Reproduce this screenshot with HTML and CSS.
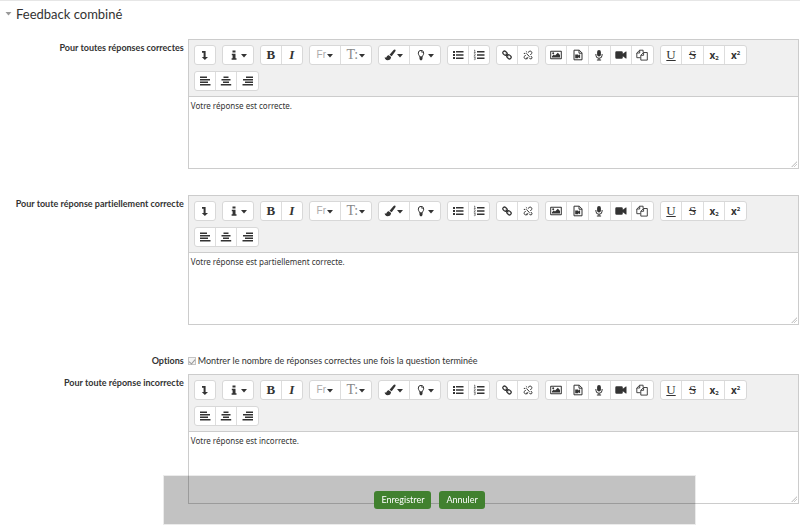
FILE: index.html
```html
<!DOCTYPE html>
<html lang="fr">
<head>
<meta charset="utf-8">
<meta name="viewport" content="width=device-width, initial-scale=1">
<title>Feedback combiné</title>
<link rel="stylesheet" href="styles.css">
</head>
<body>
<svg class="sprite" aria-hidden="true">
  <symbol id="i-toggle" viewBox="0 0 12 12"><path d="M3 2h3.600v6H9L5.900 11 2.800 8H4.600V3.800H3z"/></symbol>
  <symbol id="i-info" viewBox="0 0 12 12"><path d="M4.500 1.500h3v2h-3zM3.800 4.700h3.700v4.600h1v1.500H3.600V9.300h1V6.200h-.8z"/></symbol>
  <symbol id="i-caret" viewBox="0 0 6 4"><path d="M0 0h6L3 3.600z"/></symbol>
  <symbol id="i-brush" viewBox="0 0 12 12"><path d="M11.300.8c.6.500.3 1.200-.1 1.800L7.700 7.300 5.500 5.700 9.600 1.100c.5-.5 1.200-.7 1.700-.3zM4.800 6.200l2.300 1.700c0 2-1.500 3.300-3.500 3.300C1.800 11.200.8 10 .7 8.300c1 .6 1.700.3 2-.6.4-1 1.100-1.500 2.100-1.500z"/></symbol>
  <symbol id="i-bulb" viewBox="0 0 12 12"><path fill="none" stroke="currentColor" stroke-width="1" d="M4.700 7.800C4.600 6.500 3.300 6 3.300 4.100a2.700 2.700 0 0 1 5.400 0c0 1.900-1.300 2.400-1.400 3.700zM6.200 2.700c.7 0 1.200.4 1.200 1"/><path d="M4.500 8.100h3v2l-.8 1.200H5.300l-.8-1.200z"/></symbol>
  <symbol id="i-ul" viewBox="0 0 12 12"><path d="M1 2h2v2H1zM1 5h2v2H1zM1 8h2v2H1zM4 2h7.500v1.500H4zM4 5.200h7.500v1.500H4zM4 8.400h7.500v1.500H4z"/></symbol>
  <symbol id="i-ol" viewBox="0 0 12 12"><path d="M4 2h7.500v1.500H4zM4 5.200h7.500v1.500H4zM4 8.400h7.500v1.500H4z"/><path fill="none" stroke="currentColor" stroke-width=".6" d="M1 1.500l.8-.5v2.700M.9 3.700h1.800M.9 5c1.800-.6 1.800.6 0 2h1.700M.9 8.300h1.500l-.8 1c1.500.1 1.200 1.700-.7 1.300"/></symbol>
  <symbol id="i-link" viewBox="0 0 12 12"><g fill="none" stroke="currentColor" stroke-width="1.500" transform="rotate(42 6 6)"><rect x="0" y="4" width="5.600" height="4" rx="2"/><rect x="6.400" y="4" width="5.600" height="4" rx="2"/><path d="M3.800 6h4.400"/></g></symbol>
  <symbol id="i-unlink" viewBox="0 0 12 12"><g fill="none" stroke="currentColor" stroke-width="1.200"><path d="M5.800 3.200l1.700-1.500c1.800-1.200 4 .8 2.800 2.600L8.800 6M6.200 8.800L4.500 10.300C2.700 11.500.5 9.500 1.700 7.700L3.200 6M4 4.200l4 3.900M7.300 9.300l1.300 1.300c1.500.6 2.700-.8 2-2.100L9.300 7.200M4.600 2.600L3.500 1.500M2.800 4.100H1M4.700 9v2"/></g></symbol>
  <symbol id="i-image" viewBox="0 0 12 12"><path fill-rule="evenodd" d="M1 1.700h10q.8 0 .8.800v7q0 .8-.8.800H1q-.8 0-.8-.8v-7q0-.8.800-.8zM1.200 2.700v6.600h9.600V2.700z"/><path d="M2 8.600V7.200l1.800-1.700L5 6.600l2.800-2.800L10 6v2.600z"/><circle cx="3.200" cy="4.300" r="1"/></symbol>
  <symbol id="i-media" viewBox="0 0 12 12"><path fill="none" stroke="currentColor" d="M2 1.200h5.300L10 3.900v6.900H2zM7 1.200v3h3"/><path d="M3.200 5.500h3v1l1.900-1.200v4L6.200 8.200v1h-3z"/></symbol>
  <symbol id="i-mic" viewBox="0 0 12 12"><rect x="4.100" y="1" width="3.800" height="6.400" rx="1.900"/><path fill="none" stroke="currentColor" d="M2.900 5v1.200a3.100 3.100 0 0 0 6.200 0V5M6 9.300v1.800M3.900 11h4.200"/></symbol>
  <symbol id="i-video" viewBox="0 0 12 12"><path d="M1.500 2.300h5q1.300 0 1.300 1.200v1.300l3-2.400h.7v7.200h-.7l-3-2.400v1.300q0 1.200-1.300 1.200h-5Q.3 9.700.3 8.500v-5q0-1.200 1.200-1.200z"/></symbol>
  <symbol id="i-files" viewBox="0 0 12 12"><path fill="none" stroke="currentColor" stroke-width=".9" d="M4.500 8.700H.8V4L3.700 1.200h3.400v2.300M3.700 1.200V4H.8M7.600 3.500h3.700v7.600H4.800V6.300zM7.600 3.500v2.800H4.800"/></symbol>
  <symbol id="i-left" viewBox="0 0 12 12"><path d="M1 1.500h7V3H1zM1 4h10v1.500H1zM1 6.500h8V8H1zM1 9h10.500v1.500H1z"/></symbol>
  <symbol id="i-center" viewBox="0 0 12 12"><path d="M3.500 1.500h5V3h-5zM1.500 4h9v1.500h-9zM3 6.500h6V8H3zM.8 9h10.400v1.500H.8z"/></symbol>
  <symbol id="i-right" viewBox="0 0 12 12"><path d="M4 1.500h7V3H4zM1 4h10v1.500H1zM3 6.500h8V8H3zM.5 9H11v1.500H.5z"/></symbol>
</svg>

<template id="toolbar-template">
  <div class="group single"><button type="button" aria-label="Afficher plus de boutons"><svg class="icon"><use href="#i-toggle"/></svg></button></div>
  <div class="group menu"><button type="button" aria-label="Styles de paragraphe"><svg class="icon"><use href="#i-info"/></svg><svg class="caret"><use href="#i-caret"/></svg></button></div>
  <div class="group pair"><button type="button" aria-label="Gras"><b>B</b></button><button type="button" aria-label="Italique"><i>I</i></button></div>
  <div class="group menus"><button type="button" aria-label="Police"><span class="family">Fr</span><svg class="caret"><use href="#i-caret"/></svg></button><button type="button" aria-label="Taille"><span class="size">T:</span><svg class="caret"><use href="#i-caret"/></svg></button></div>
  <div class="group menus"><button type="button" aria-label="Couleur du texte"><svg class="icon"><use href="#i-brush"/></svg><svg class="caret"><use href="#i-caret"/></svg></button><button type="button" aria-label="Couleur de fond"><svg class="icon"><use href="#i-bulb"/></svg><svg class="caret"><use href="#i-caret"/></svg></button></div>
  <div class="group pair"><button type="button" aria-label="Liste à puces"><svg class="icon"><use href="#i-ul"/></svg></button><button type="button" aria-label="Liste numérotée"><svg class="icon"><use href="#i-ol"/></svg></button></div>
  <div class="group pair"><button type="button" aria-label="Lien"><svg class="icon small"><use href="#i-link"/></svg></button><button type="button" aria-label="Supprimer le lien"><svg class="icon small"><use href="#i-unlink"/></svg></button></div>
  <div class="group five"><button type="button" aria-label="Image"><svg class="icon"><use href="#i-image"/></svg></button><button type="button" aria-label="Média"><svg class="icon"><use href="#i-media"/></svg></button><button type="button" aria-label="Enregistrer du son"><svg class="icon"><use href="#i-mic"/></svg></button><button type="button" aria-label="Enregistrer une vidéo"><svg class="icon"><use href="#i-video"/></svg></button><button type="button" aria-label="Gérer les fichiers"><svg class="icon"><use href="#i-files"/></svg></button></div>
  <div class="group four"><button type="button" aria-label="Souligné"><u>U</u></button><button type="button" aria-label="Barré"><s>S</s></button><button type="button" aria-label="Indice"><span class="script">x<sub>2</sub></span></button><button type="button" aria-label="Exposant"><span class="script">x<sup>2</sup></span></button></div>
  <div class="group three"><button type="button" aria-label="Aligner à gauche"><svg class="icon"><use href="#i-left"/></svg></button><button type="button" aria-label="Centrer"><svg class="icon"><use href="#i-center"/></svg></button><button type="button" aria-label="Aligner à droite"><svg class="icon"><use href="#i-right"/></svg></button></div>
</template>

<form>
  <h1><svg class="fold"><use href="#i-caret"/></svg>Feedback combiné</h1>
  <div class="row">
    <label for="correct">Pour toutes réponses correctes</label>
    <div class="editor"><div class="toolbar"></div><textarea id="correct">Votre réponse est correcte.</textarea></div>
  </div>
  <div class="row">
    <label for="partial">Pour toute réponse partiellement correcte</label>
    <div class="editor"><div class="toolbar"></div><textarea id="partial">Votre réponse est partiellement correcte.</textarea></div>
  </div>
  <div class="row options">
    <span class="name">Options</span>
    <label class="check" for="count"><input type="checkbox" id="count" checked disabled>Montrer le nombre de réponses correctes une fois la question terminée</label>
  </div>
  <div class="row">
    <label for="incorrect">Pour toute réponse incorrecte</label>
    <div class="editor"><div class="toolbar"></div><textarea id="incorrect">Votre réponse est incorrecte.</textarea></div>
  </div>
  <div class="actions"><button type="submit">Enregistrer</button><button type="button">Annuler</button></div>
</form>
<script src="toolbar.js"></script>
</body>
</html>
```
FILE: toolbar.js
```js
const template = document.getElementById("toolbar-template");
document.querySelectorAll(".toolbar").forEach((bar) => {
  bar.append(template.content.cloneNode(true));
});
```
FILE: styles.css
```css
* { box-sizing: border-box; }
body {
  margin: 0;
  border-top: 1px solid #e6e6e6;
  background: #fff;
  color: #333;
  font: 9px/12px Lato, "Noto Sans", sans-serif;
  font-variant-ligatures: none;
}
button, textarea { font: inherit; color: inherit; }
svg { fill: currentColor; flex: none; }
.sprite { position: absolute; width: 0; height: 0; }

h1 {
  display: flex;
  align-items: flex-start;
  gap: 4px;
  margin: 0;
  padding: 4px 5px 16px;
  font-size: 13px;
  line-height: 18px;
  font-weight: 400;
}
.fold { width: 7px; height: 4px; margin-top: 7px; color: #999; }

.row {
  display: grid;
  grid-template-columns: 23% minmax(0, 1fr);
  column-gap: 4px;
  margin: 0 1px 26px 0;
}
.row > label:first-child, .name {
  padding-top: 3px;
  text-align: right;
  font-weight: 700;
}
.options { margin-top: 27px; margin-bottom: 7px; }
.options .check { padding-top: 3px; }
.check { display: flex; align-items: center; gap: 2px; }
.check input {
  appearance: none;
  width: 8px;
  height: 8px;
  margin: 0;
  border: 1px solid #c4c4c4;
  background: #f4f4f4;
  display: grid;
}
.check input::after {
  content: "";
  width: 3px;
  height: 5px;
  margin: 0 auto;
  border: solid #999;
  border-width: 0 1px 1px 0;
  transform: rotate(40deg);
}

.editor {
  position: relative;
  border: 1px solid #ccc;
}
.editor::after {
  content: "";
  position: absolute;
  right: 1px;
  bottom: 1px;
  width: 6px;
  height: 6px;
  background: repeating-linear-gradient(135deg, #ccc 0 1px, transparent 1px 2px);
  clip-path: polygon(100% 0, 100% 100%, 0 100%);
}
.toolbar {
  display: flex;
  flex-wrap: wrap;
  gap: 6px;
  padding: 5px;
  border-bottom: 1px solid #ccc;
  background: #f0f0f0;
}
.group {
  display: flex;
  height: 20px;
  border: 1px solid #d8d8d8;
  border-radius: 3px;
  background: #fff;
}
.single { width: 22px; }
.menu { width: 32px; }
.pair { width: 43px; }
.menus { width: 63px; }
.three { width: 65px; }
.four { width: 87px; }
.five { width: 109px; }
.group button {
  flex: 1;
  display: flex;
  align-items: center;
  justify-content: center;
  gap: 1px;
  min-width: 0;
  padding: 0;
  border: 0;
  background: none;
  color: #333;
}
.group button + button { border-left: 1px solid #ddd; }
.icon { width: 12px; height: 12px; }
.small { width: 10px; height: 10px; }
.caret { width: 6px; height: 4px; margin-top: 1px; }
.group b, .group i, .group u, .group s {
  font: 700 13px/14px "Liberation Serif", serif;
}
.group i { font-style: italic; }
.group u, .group s { font-weight: 400; }
.family { color: #aaa; font: 10px/12px "Liberation Sans", sans-serif; }
.size { color: #888; font: 14px/14px "Liberation Serif", serif; }
.script { font: 700 10px/12px "Noto Sans", sans-serif; }
.script sub, .script sup { font-size: 6px; line-height: 0; }
.script sub { vertical-align: -1px; }

textarea {
  display: block;
  width: 100%;
  height: 71px;
  padding: 3px 2px;
  border: 0;
  outline: 0;
  resize: none;
  background: #fff;
  font: 8px/12px "Noto Sans", sans-serif;
}

.actions {
  position: fixed;
  left: 20.4%;
  right: 13%;
  bottom: 1px;
  display: flex;
  align-items: center;
  justify-content: center;
  gap: 8px;
  height: 50px;
  border: 1px solid rgba(0, 0, 0, .08);
  background: rgba(0, 0, 0, .24);
  background-clip: padding-box;
}
.actions button {
  padding: 3px 7px;
  border: 0;
  border-radius: 3px;
  background: #41812f;
  color: #fff;
}
```
